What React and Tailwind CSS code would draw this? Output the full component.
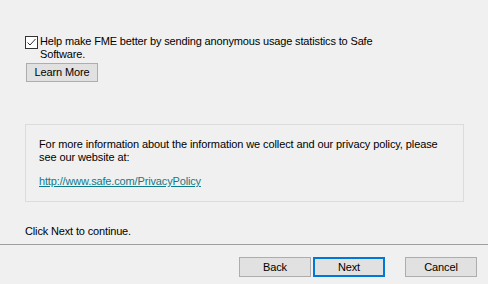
export default function App() {
  return (
    <div className="w-[488px] h-[284px] bg-[#f0f0f0] text-black text-[11px] leading-[13px] tracking-[-0.15px] font-['Liberation_Sans',Arial,sans-serif] flex flex-col overflow-hidden">
      <div className="pl-[25px] pr-[24px] flex-1">
        {/* usage stats checkbox */}
        <label className="flex items-start mt-[35px]">
          <span className="mt-[1px] w-[13px] h-[13px] border border-[#333] bg-white flex items-center justify-center shrink-0">
            <svg width="11" height="11" viewBox="0 0 11 11" fill="none">
              <path d="M1.5 5.5l2.5 2.5 5.5-6" stroke="#333" strokeWidth="1" />
            </svg>
          </span>
          <span className="ml-[2px] w-[340px]">
            Help make FME better by sending anonymous usage statistics to Safe Software.
          </span>
        </label>
        <button className="mt-[2px] ml-[1px] w-[72px] h-[19px] bg-[#e1e1e1] border border-[#adadad] leading-none">
          Learn More
        </button>

        <div className="mt-[42px] w-[439px] h-[78px] border border-[#dcdcdc] px-[13px] pt-[13px]">
          <p className="tracking-[-0.1px]">
            For more information about the information we collect and our privacy policy, please
            see our website at:
          </p>
          <a href="#" className="block mt-[11px] text-[#0f7a8a] underline">
            http://www.safe.com/PrivacyPolicy
          </a>
        </div>

        <p className="mt-[23px]">Click Next to continue.</p>
      </div>

      <div className="border-t border-[#a0a0a0] h-[40px] flex items-start justify-end pt-[12px] pr-[11px]">
        <button className="w-[72px] h-[20px] bg-[#e1e1e1] border border-[#adadad] leading-none">Back</button>
        <button className="ml-[2px] w-[72px] h-[20px] bg-[#e1e1e1] border-2 border-[#0078d7] leading-none">Next</button>
        <button className="ml-[20px] w-[72px] h-[20px] bg-[#e1e1e1] border border-[#adadad] leading-none">Cancel</button>
      </div>
    </div>
  )
}
